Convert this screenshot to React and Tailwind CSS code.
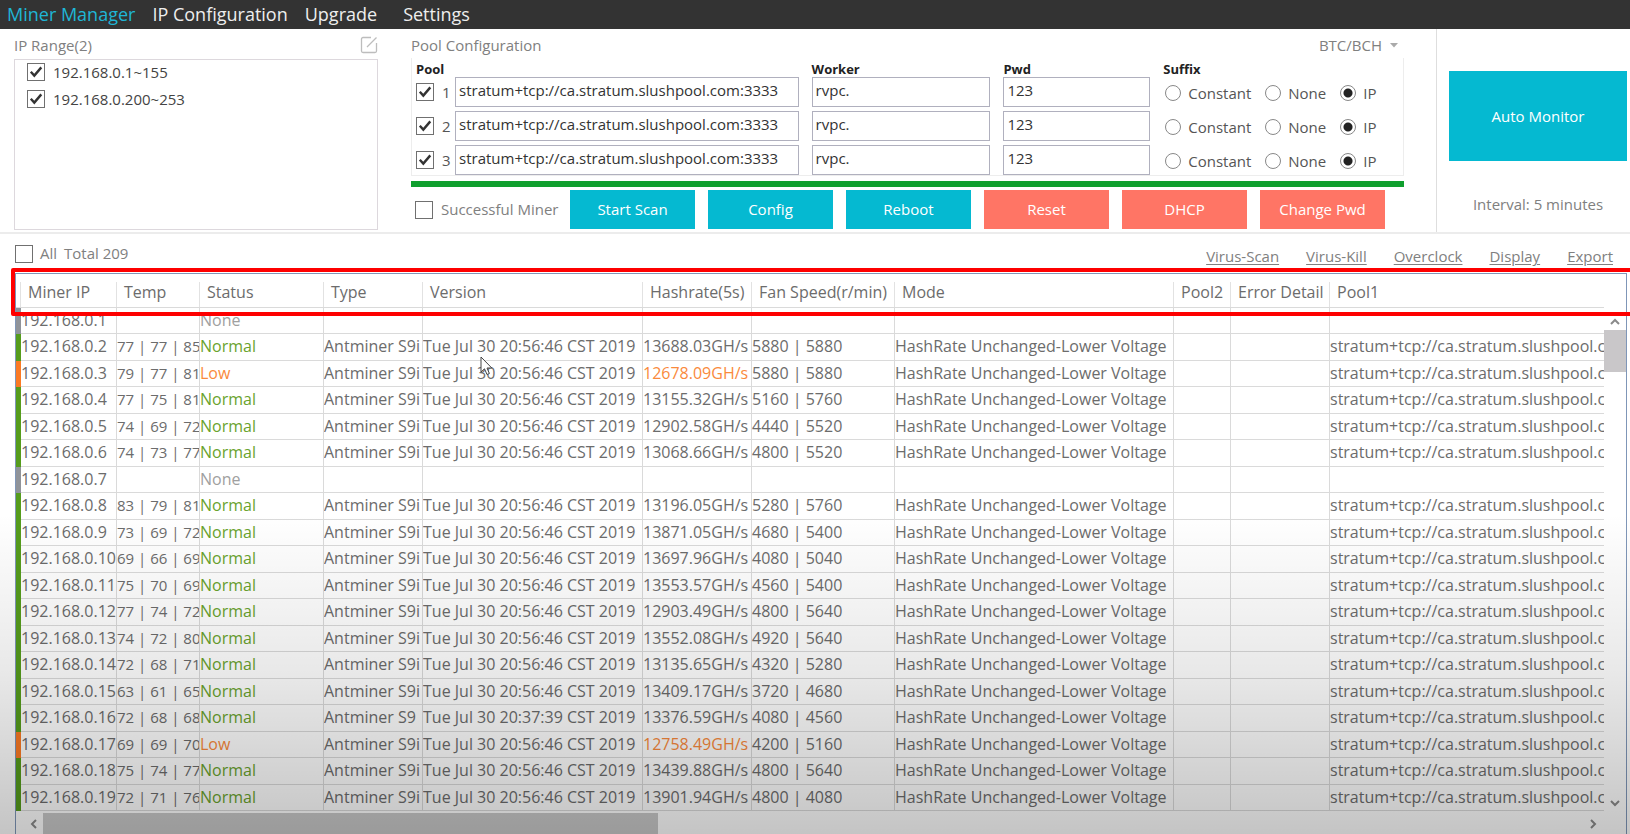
import { Fragment } from "react";

const NAV = ["Miner Manager", "IP Configuration", "Upgrade", "Settings"];
const RANGES = ["192.168.0.1~155", "192.168.0.200~253"];
const SUFFIXES = ["Constant", "None", "IP"];
const ACTIONS = [
  { label: "Start Scan" },
  { label: "Config" },
  { label: "Reboot" },
  { label: "Reset", danger: true },
  { label: "DHCP", danger: true },
  { label: "Change Pwd", danger: true },
];
const LINKS = ["Virus-Scan", "Virus-Kill", "Overclock", "Display", "Export"];
const COLUMNS = [
  { name: "Miner IP", width: "w-[96px]" },
  { name: "Temp", width: "w-[83px]" },
  { name: "Status", width: "w-[124px]" },
  { name: "Type", width: "w-[99px]" },
  { name: "Version", width: "w-[220px]" },
  { name: "Hashrate(5s)", width: "w-[109px]" },
  { name: "Fan Speed(r/min)", width: "w-[143px]" },
  { name: "Mode", width: "w-[279px]" },
  { name: "Pool2", width: "w-[57px]" },
  { name: "Error Detail", width: "w-[99px]" },
  { name: "Pool1", width: "" },
];
const BUILD = "Tue Jul 30 20:56:46 CST 2019";
const MINERS = [
  null,
  ["77 | 77 | 85", "13688.03", "5880 | 5880"],
  ["79 | 77 | 81", "12678.09", "5880 | 5880", "Low"],
  ["77 | 75 | 81", "13155.32", "5160 | 5760"],
  ["74 | 69 | 72", "12902.58", "4440 | 5520"],
  ["74 | 73 | 77", "13068.66", "4800 | 5520"],
  null,
  ["83 | 79 | 81", "13196.05", "5280 | 5760"],
  ["73 | 69 | 72", "13871.05", "4680 | 5400"],
  ["69 | 66 | 69", "13697.96", "4080 | 5040"],
  ["75 | 70 | 69", "13553.57", "4560 | 5400"],
  ["77 | 74 | 72", "12903.49", "4800 | 5640"],
  ["74 | 72 | 80", "13552.08", "4920 | 5640"],
  ["72 | 68 | 71", "13135.65", "4320 | 5280"],
  ["63 | 61 | 65", "13409.17", "3720 | 4680"],
  ["72 | 68 | 68", "13376.59", "4080 | 4560", "Normal", "Antminer S9", "Tue Jul 30 20:37:39 CST 2019"],
  ["69 | 69 | 70", "12758.49", "4200 | 5160", "Low"],
  ["75 | 74 | 77", "13439.88", "4800 | 5640"],
  ["72 | 71 | 76", "13901.94", "4800 | 4080"],
];
const STATUS = {
  None: { text: "text-[#a0a0a0]", bar: "border-l-[#8f9399]" },
  Normal: { text: "text-[#6aa32d]", bar: "border-l-[#559c1c]" },
  Low: { text: "text-[#fa8a3c]", bar: "border-l-[#fb7a24]" },
};

function Tick({ id, checked, label }) {
  return (
    <span className="relative block size-[18px] shrink-0">
      <input
        id={id}
        type="checkbox"
        defaultChecked={checked}
        aria-label={label}
        className="peer block size-[18px] appearance-none border border-[#707070] bg-white"
      />
      <svg
        viewBox="0 0 18 18"
        className="pointer-events-none absolute inset-0 hidden size-[18px] fill-none stroke-[#333] stroke-[2.4] peer-checked:block"
      >
        <path d="M3.8 8.8 7.3 12.6 14.3 4.4" />
      </svg>
    </span>
  );
}

function Field({ label, value }) {
  return (
    <input
      aria-label={label}
      defaultValue={value}
      className="h-[30px] w-full min-w-0 border border-[#b0b0be] bg-white px-[3px] pb-[5px] text-[15px] text-[#333]"
    />
  );
}

function PoolGrid() {
  return (
    <div className="grid grid-cols-[383fr_179fr_147fr_240fr] gap-x-[13px] gap-y-1 border border-t-0 border-[#ededed] pl-1 text-[15px] text-[#555]">
      {["Pool", "Worker", "Pwd", "Suffix"].map((h) => (
        <span key={h} className="-mb-1 pt-1 text-[13px] leading-[15px] font-bold text-[#222]">
          {h}
        </span>
      ))}
      {[1, 2, 3].map((n) => (
        <Fragment key={n}>
          <div className="flex items-center">
            <Tick id={`pool${n}`} checked />
            <label htmlFor={`pool${n}`} className="w-[21px] shrink-0 pl-2">
              {n}
            </label>
            <Field label={`Pool ${n} URL`} value="stratum+tcp://ca.stratum.slushpool.com:3333" />
          </div>
          <Field label={`Pool ${n} worker`} value="rvpc." />
          <Field label={`Pool ${n} password`} value="123" />
          <div className="flex items-center gap-[14px] pt-[2px] pl-[2px]">
            {SUFFIXES.map((s) => (
              <label key={s} className="flex items-center gap-[7px]">
                <input
                  type="radio"
                  name={`suffix${n}`}
                  defaultChecked={s === "IP"}
                  className="size-4 appearance-none rounded-full border border-[#888] bg-white checked:bg-[radial-gradient(circle,#222_4px,white_5px)]"
                />
                {s}
              </label>
            ))}
          </div>
        </Fragment>
      ))}
    </div>
  );
}

function Chevron({ d }) {
  return (
    <svg viewBox="0 0 12 12" className="size-3 fill-none stroke-[#8a8a8a] stroke-2">
      <path d={d} />
    </svg>
  );
}

function MinerTable() {
  return (
    <table className="w-full table-fixed border-separate border-spacing-0 text-[16px] leading-5 text-[#6c6c6c]">
      <colgroup>
        <col className="w-[5px]" />
        {COLUMNS.map((c) => (
          <col key={c.name} className={c.width} />
        ))}
      </colgroup>
      <thead>
        <tr className="h-[34px]">
          <th aria-label="State" className="border-b border-[#dadada] p-0" />
          {COLUMNS.map((c) => (
            <th key={c.name} className="border-b border-[#dadada] p-0 pt-2 text-left font-normal whitespace-nowrap">
              <div className="-ml-px h-[25px] border-l border-[#e2e2e2] pl-[7px]">{c.name}</div>
            </th>
          ))}
        </tr>
      </thead>
      <tbody>
        {MINERS.map((m, i) => {
          const state = m ? m[3] || "Normal" : "None";
          const s = STATUS[state];
          const cells = m
            ? [m[0], state, m[4] || "Antminer S9i", m[5] || BUILD, m[1] + "GH/s", m[2], "HashRate Unchanged-Lower Voltage", "", "", "stratum+tcp://ca.stratum.slushpool.com:3333"]
            : ["", state, "", "", "", "", "", "", "", ""];
          return (
            <tr key={i} className="h-[26px] even:h-[27px]">
              <td className={`border-l-[5px] p-0 ${s.bar}`} />
              {[`192.168.0.${i + 1}`, ...cells].map((text, c) => (
                <td
                  key={c}
                  className={`overflow-hidden border-b border-[#dadada] p-0 pb-[2px] whitespace-nowrap not-last:border-r ${
                    c === 1 ? "text-[15px]" : ""
                  } ${c === 2 || (c === 5 && state === "Low") ? s.text : ""}`}
                >
                  {text}
                </td>
              ))}
            </tr>
          );
        })}
      </tbody>
    </table>
  );
}

export default function App() {
  return (
    <div className="relative flex h-screen flex-col overflow-hidden bg-white font-['Open_Sans','Noto_Sans',sans-serif] text-[15px] text-[#808080]">
      <nav className="flex h-[29px] shrink-0 items-center gap-[17px] bg-[#333] px-[7px] text-[18px] text-[#eee]">
        {NAV.map((n) => (
          <a key={n} href="#" className="first:text-[#1fb6d6] last:ml-[9px]">
            {n}
          </a>
        ))}
      </nav>

      <div className="flex h-[205px] shrink-0 border-b-2 border-[#ececec]">
        <section className="ml-[14px] w-[364px]">
          <header className="flex h-[30px] items-center justify-between pt-[2px]">
            <h2>IP Range(2)</h2>
            <button aria-label="Edit IP ranges">
              <svg viewBox="0 0 18 18" className="size-[18px] fill-none stroke-[#bdbdbd] stroke-[1.3]">
                <path d="M11 1.5H3A1.5 1.5 0 0 0 1.5 3v12A1.5 1.5 0 0 0 3 16.500h12a1.500 1.500 0 0 0 1.500-1.500V7M7 11 16.500 1.500" />
              </svg>
            </button>
          </header>
          <ul className="h-[171px] border border-[#ddd8dd] pt-[3px] pl-3 text-[#444]">
            {RANGES.map((r, i) => (
              <li key={r} className="mb-[9px] flex h-[18px] items-center gap-[8px]">
                <Tick id={`range${i}`} checked />
                <label htmlFor={`range${i}`}>{r}</label>
              </li>
            ))}
          </ul>
        </section>

        <section className="ml-[33px] min-w-0 flex-1">
          <header className="flex h-[29px] items-center justify-between pt-[3px] pr-[6px]">
            <h2>Pool Configuration</h2>
            <button className="flex items-center gap-2">
              BTC/BCH
              <svg viewBox="0 0 8 5" className="h-[5px] w-2 fill-[#aaa]">
                <path d="M0 0h8L4 4.500z" />
              </svg>
            </button>
          </header>
          <PoolGrid />
          <div className="mt-[5px] h-[6px] bg-[#0f9f2e]" />
          <div className="mt-[3px] flex items-center pl-1">
            <Tick id="successful" />
            <label htmlFor="successful" className="w-[137px] shrink-0 pl-2">
              Successful Miner
            </label>
            <div className="flex flex-1 gap-[13px] pr-[19px]">
              {ACTIONS.map((a) => (
                <button
                  key={a.label}
                  className={`h-[39px] flex-1 text-white ${a.danger ? "bg-[#ff7565]" : "bg-[#05b9d1]"}`}
                >
                  {a.label}
                </button>
              ))}
            </div>
          </div>
        </section>

        <aside className="ml-8 flex w-[194px] flex-col items-center border-l border-[#dedede] pt-[42px] pr-[3px] pl-3">
          <button className="h-[90px] w-full bg-[#05b9d1] text-white">Auto Monitor</button>
          <p className="mt-8">Interval: 5 minutes</p>
        </aside>
      </div>

      <div className="flex h-[39px] shrink-0 items-center justify-between pr-[17px] pl-[15px]">
        <div className="flex items-center gap-[7px]">
          <Tick id="all" />
          <label htmlFor="all">All</label>
          <span>Total 209</span>
        </div>
        <div className="flex gap-[27px] pt-[6px]">
          {LINKS.map((l) => (
            <a key={l} href="#" className="underline underline-offset-2">
              {l}
            </a>
          ))}
        </div>
      </div>

      <div className="relative mr-[3px] ml-[15px] flex flex-1 flex-col border border-b-0 border-[#7f96b8]">
        <div className="flex flex-1">
          <div className="min-w-0 flex-1">
            <MinerTable />
          </div>
          <div className="mt-[40px] flex w-[22px] flex-col items-center justify-between pb-1">
            <div className="flex w-full flex-col items-center">
              <button aria-label="Scroll up" className="h-4">
                <Chevron d="M2 8 6 4l4 4" />
              </button>
              <div className="h-[42px] w-full bg-[#c9c7c9]" />
            </div>
            <button aria-label="Scroll down">
              <Chevron d="M2 4l4 4 4-4" />
            </button>
          </div>
        </div>
        <div className="flex h-[21px] shrink-0 items-center">
          <button aria-label="Scroll left" className="flex w-[27px] justify-center pl-2">
            <Chevron d="M8 2 4 6l4 4" />
          </button>
          <div className="flex h-full flex-1">
            <div className="h-full w-[615px] bg-[#c9c9c9]" />
          </div>
          <button aria-label="Scroll right" className="mr-[27px]">
            <Chevron d="M4 2l4 4-4 4" />
          </button>
        </div>
        <div className="pointer-events-none absolute -top-[6px] -right-2 -left-[5px] h-12 rounded-[2px] border-4 border-[#fe0000]" />
        <svg
          viewBox="0 0 13 20"
          className="pointer-events-none absolute top-[82px] left-[464px] h-5 w-[13px] fill-white stroke-[#444]"
        >
          <path d="M1 1v15l3.500-3.200L7 18.500l2.400-1L7 12h4.800z" />
        </svg>
      </div>
      <div className="pointer-events-none absolute inset-x-0 bottom-0 h-[320px] bg-linear-to-b from-black/0 via-black/9 to-black/23" />
    </div>
  );
}
